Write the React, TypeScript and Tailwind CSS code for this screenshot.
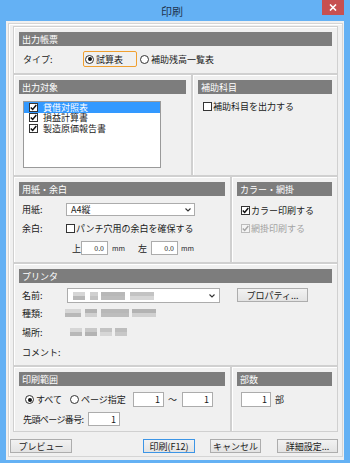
import React from 'react'

const shades = ['#bdbdbd', '#c8c8c8', '#b3b3b3', '#d0d0d0', '#c3c3c3', '#d6d6d6', '#b8b8b8']

// ぼかされた文字（モザイク）
function Blur({ groups }: { groups: [number, number][] }) {
  const w = Math.max(...groups.map(([x, gw]) => x + gw))
  const rects: React.ReactNode[] = []
  let k = 0
  groups.forEach(([x, gw]) => {
    for (let cx = x; cx < x + gw; cx += 4) {
      for (let r = 0; r < 2; r++) {
        k++
        rects.push(
          <rect
            key={k}
            x={cx}
            y={r * 4}
            width={Math.min(4, x + gw - cx)}
            height={4}
            fill={shades[(k * 5 + r * 3 + cx) % shades.length]}
          />
        )
      }
    }
  })
  return (
    <svg width={w} height={8} className="shrink-0">
      {rects}
    </svg>
  )
}

function Check({ checked, disabled }: { checked?: boolean; disabled?: boolean }) {
  return (
    <span
      className={`w-[9px] h-[9px] border flex items-center justify-center shrink-0 ${
        disabled ? 'border-[#bcbcbc] bg-[#f4f4f4]' : 'border-[#333333] bg-white'
      }`}
    >
      {checked && (
        <svg width="7" height="7" viewBox="0 0 7 7">
          <path
            d="M0.8 3.4 L2.7 5.4 L6.3 1.1"
            fill="none"
            stroke={disabled ? '#a8a8a8' : '#111111'}
            strokeWidth="1.5"
          />
        </svg>
      )}
    </span>
  )
}

function Radio({ checked }: { checked?: boolean }) {
  return (
    <span className="w-[9px] h-[9px] rounded-full border border-[#333333] bg-white flex items-center justify-center shrink-0">
      {checked && <span className="w-[4px] h-[4px] rounded-full bg-[#111111]" />}
    </span>
  )
}

function Chevron() {
  return (
    <svg width="6" height="4" viewBox="0 0 6 4" className="shrink-0">
      <path d="M0.5 0.5 L3 3 L5.5 0.5" fill="none" stroke="#333333" strokeWidth="1.1" />
    </svg>
  )
}

function Num({ value, w, h = 'h-[15px]', small }: { value: string; w: string; h?: string; small?: boolean }) {
  return (
    <span
      className={`${w} ${h} border border-[#acacac] bg-white flex items-center justify-end pr-[3px] shrink-0 ${
        small ? 'text-[7px]' : ''
      }`}
    >
      {value}
    </span>
  )
}

function Btn({ children, w, primary }: { children: React.ReactNode; w: string; primary?: boolean }) {
  return (
    <div
      className={`${w} h-[14px] border flex items-center justify-center bg-gradient-to-b from-[#f2f2f2] to-[#e3e3e3] ${
        primary ? 'border-[#3c95e6]' : 'border-[#adadad]'
      }`}
    >
      {children}
    </div>
  )
}

function Group({
  title,
  className,
  children,
}: {
  title: string
  className?: string
  children?: React.ReactNode
}) {
  return (
    <div
      className={`border border-[#d0d0d0] shadow-[inset_1px_1px_0_#ffffff] px-[5px] pt-[5px] flex flex-col ${
        className ?? ''
      }`}
    >
      <div className="h-[14px] bg-[#7d7d7d] text-white pl-[3px] flex items-center shrink-0">{title}</div>
      {children}
    </div>
  )
}

export default function App() {
  return (
    <div className="w-[350px] h-[463px] bg-[#64b1f4] flex flex-col font-['Noto_Sans_CJK_JP',sans-serif] text-[9px] text-[#1a1a1a] leading-none whitespace-nowrap">
      {/* タイトルバー */}
      <div className="h-[21px] flex shrink-0">
        <div className="flex-1" />
        <div className="text-[11px] text-[#1f3550] pt-[6px]">印刷</div>
        <div className="flex-1 flex justify-end pr-[6px]">
          <div className="w-[22px] h-[15px] bg-[#c75050] flex items-center justify-center">
            <svg width="8" height="7" viewBox="0 0 8 7">
              <path d="M1 0.5 L7 6.5 M7 0.5 L1 6.5" stroke="#ffffff" strokeWidth="1.6" />
            </svg>
          </div>
        </div>
      </div>

      <div className="mx-[6px] h-[439px] bg-[#f0f0f0] pt-[2px] pl-[2px] pr-[3px] pb-[3px] flex">
        <div className="flex-1 border border-[#d5d5d5] shadow-[inset_1px_1px_0_#ffffff] px-[4px] pt-[2px] flex flex-col">
          {/* 出力帳票 */}
          <Group title="出力帳票" className="h-[48px]">
            <div className="mt-[5px] h-[16px] flex items-center">
              <span className="ml-[4px] w-[60px]">タイプ:</span>
              <span className="w-[54px] h-[16px] border border-[#f0a030] rounded-[2px] flex items-center pl-[1px] gap-[2px]">
                <Radio checked />
                <span>試算表</span>
              </span>
              <span className="ml-[3px] flex items-center gap-[2px]">
                <Radio />
                <span>補助残高一覧表</span>
              </span>
            </div>
          </Group>

          {/* 出力対象 / 補助科目 */}
          <div className="h-[102px] flex">
            <Group title="出力対象" className="w-[179px]">
              <div className="mt-[7px] ml-[4px] w-[138px] h-[67px] border border-[#9a9a9a] bg-white">
                {[
                  ['貸借対照表', true],
                  ['損益計算書', false],
                  ['製造原価報告書', false],
                ].map(([label, sel]) => (
                  <div
                    key={label as string}
                    className={`h-[10.5px] leading-[9px] flex items-center pl-[5px] gap-[5px] overflow-hidden ${
                      sel ? 'bg-[#3399ff] text-white' : ''
                    }`}
                  >
                    <Check checked />
                    <span>{label}</span>
                  </div>
                ))}
              </div>
            </Group>
            <Group title="補助科目" className="flex-1">
              <div className="mt-[7px] ml-[5px] h-[10px] flex items-center gap-[1px]">
                <Check />
                <span>補助科目を出力する</span>
              </div>
            </Group>
          </div>

          {/* 用紙・余白 / カラー・網掛 */}
          <div className="h-[87px] flex">
            <Group title="用紙・余白" className="w-[218px]">
              <div className="mt-[7px] h-[13px] flex items-center">
                <span className="ml-[3px] w-[44px]">用紙:</span>
                <span className="w-[129px] h-[13px] border border-[#acacac] bg-white flex items-center justify-between pl-[4px] pr-[3px]">
                  <span>A4縦</span>
                  <Chevron />
                </span>
              </div>
              <div className="mt-[6px] h-[12px] flex items-center">
                <span className="ml-[3px] w-[44px]">余白:</span>
                <Check />
                <span className="ml-[1px]">パンチ穴用の余白を確保する</span>
              </div>
              <div className="mt-[7px] h-[14px] flex items-center">
                <span className="ml-[53px] w-[9px]">上</span>
                <Num value="0.0" w="w-[27px]" h="h-[14px]" small />
                <span className="ml-[4px] text-[7px]">mm</span>
                <span className="ml-[13px] w-[9px]">左</span>
                <span className="ml-[4px]">
                  <Num value="0.0" w="w-[27px]" h="h-[14px]" small />
                </span>
                <span className="ml-[3px] text-[7px]">mm</span>
              </div>
            </Group>
            <Group title="カラー・網掛" className="flex-1">
              <div className="mt-[8px] ml-[4px] h-[12px] flex items-center gap-[1px]">
                <Check checked />
                <span>カラー印刷する</span>
              </div>
              <div className="mt-[6px] ml-[4px] h-[12px] flex items-center gap-[1px] text-[#a3a3a3]">
                <Check checked disabled />
                <span>網掛印刷する</span>
              </div>
            </Group>
          </div>

          {/* プリンタ */}
          <Group title="プリンタ" className="h-[103px]">
            <div className="mt-[5px] h-[15px] flex items-start">
              <span className="ml-[3px] w-[45px] h-[15px] flex items-center">名前:</span>
              <span className="w-[153px] h-[15px] border border-[#acacac] bg-white flex items-center justify-between pl-[5px] pr-[4px]">
                <Blur groups={[[0, 12], [17, 8], [28, 24], [57, 24]]} />
                <Chevron />
              </span>
              <span className="ml-[17px]">
                <Btn w="w-[71px]">プロパティ...</Btn>
              </span>
            </div>
            <div className="mt-[4px] h-[12px] flex items-center">
              <span className="ml-[3px] w-[43px]">種類:</span>
              <Blur groups={[[0, 16], [20, 12], [36, 28], [67, 24]]} />
            </div>
            <div className="mt-[7px] h-[12px] flex items-center">
              <span className="ml-[3px] w-[48px]">場所:</span>
              <Blur groups={[[0, 12], [15, 12], [30, 12], [45, 12]]} />
            </div>
            <div className="mt-[8px] h-[12px] flex items-center">
              <span className="ml-[3px]">コメント:</span>
            </div>
          </Group>

          {/* 印刷範囲 / 部数 */}
          <div className="h-[66px] flex">
            <Group title="印刷範囲" className="w-[218px]">
              <div className="mt-[6px] h-[15px] flex items-center">
                <span className="ml-[6px] w-[45px] flex items-center gap-[2px]">
                  <Radio checked />
                  <span>すべて</span>
                </span>
                <span className="w-[63px] flex items-center gap-[2px]">
                  <Radio />
                  <span>ページ指定</span>
                </span>
                <Num value="1" w="w-[31px]" />
                <span className="ml-[4px] w-[14px]">～</span>
                <Num value="1" w="w-[31px]" />
              </div>
              <div className="mt-[5px] h-[14px] flex items-center">
                <span className="ml-[4px] w-[65px] tracking-[-0.6px]">先頭ページ番号:</span>
                <Num value="1" w="w-[32px]" h="h-[14px]" />
              </div>
            </Group>
            <Group title="部数" className="flex-1">
              <div className="mt-[6px] h-[15px] flex items-center">
                <span className="ml-[4px]">
                  <Num value="1" w="w-[30px]" />
                </span>
                <span className="ml-[4px]">部</span>
              </div>
            </Group>
          </div>

          {/* ボタン */}
          <div className="mt-[7px] h-[14px] flex">
            <span className="ml-[-3px]">
              <Btn w="w-[62px]">プレビュー</Btn>
            </span>
            <span className="ml-[71px]">
              <Btn w="w-[52px]" primary>
                印刷(F12)
              </Btn>
            </span>
            <span className="ml-[15px]">
              <Btn w="w-[51px]">キャンセル</Btn>
            </span>
            <span className="ml-[16px]">
              <Btn w="w-[61px]">詳細設定...</Btn>
            </span>
          </div>
        </div>
      </div>
    </div>
  )
}
